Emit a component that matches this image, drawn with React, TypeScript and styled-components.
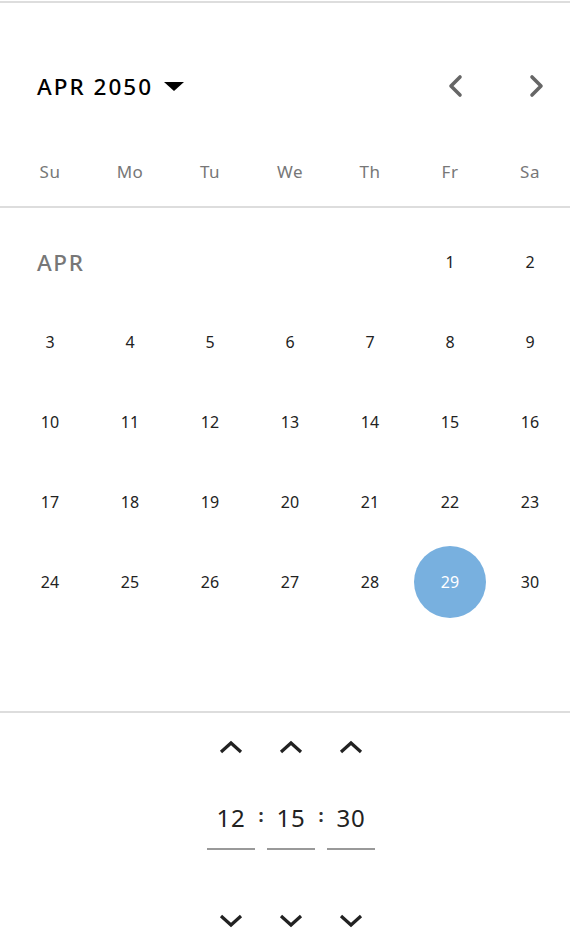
import React from 'react';
import styled, { createGlobalStyle } from 'styled-components';

const GlobalStyle = createGlobalStyle`
  body {
    margin: 0;
    background: #fff;
    font-family: "Noto Sans", "Open Sans", sans-serif;
  }
`;

const Picker = styled.div`
  width: 570px;
  margin-top: 1px;
  border-top: 2px solid #dddddd;
  color: #222;
`;

const Header = styled.div`
  display: flex;
  align-items: center;
  justify-content: space-between;
  height: 60px;
  margin-top: 53px;
  padding: 0 25px 0 37px;
`;

const MonthButton = styled.button`
  display: flex;
  align-items: center;
  gap: 11px;
  border: none;
  background: none;
  padding: 0;
  font-family: inherit;
  font-size: 22.5px;
  font-weight: 500;
  letter-spacing: 2px;
  color: #000;
  cursor: pointer;
`;

const Caret = styled.span`
  width: 0;
  height: 0;
  border-left: 10.5px solid transparent;
  border-right: 10.5px solid transparent;
  border-top: 9px solid #000;
`;

const NavGroup = styled.div`
  display: flex;
  align-items: center;
  gap: 66px;
`;

const NavButton = styled.button`
  display: flex;
  border: none;
  background: none;
  padding: 0;
  cursor: pointer;
`;

const WeekRow = styled.div`
  display: grid;
  grid-template-columns: repeat(7, 80px);
  padding: 35px 10px 15px;
  border-bottom: 2px solid #dddddd;
`;

const WeekDay = styled.div`
  height: 40px;
  display: flex;
  align-items: center;
  justify-content: center;
  font-size: 17px;
  letter-spacing: 0.5px;
  color: #777;
`;

const DayGrid = styled.div`
  display: grid;
  grid-template-columns: repeat(7, 80px);
  grid-auto-rows: 80px;
  padding: 14px 10px 89px;
  border-bottom: 2px solid #dddddd;
`;

const MonthLabel = styled.div`
  grid-column: span 5;
  display: flex;
  align-items: center;
  padding-left: 27px;
  font-size: 22.5px;
  font-weight: 500;
  letter-spacing: 1.6px;
  color: #777;
`;

const DayCell = styled.div`
  display: flex;
  align-items: center;
  justify-content: center;
`;

const DayButton = styled.button<{ $selected?: boolean }>`
  width: 72px;
  height: 72px;
  border: none;
  border-radius: 50%;
  padding: 0;
  font-family: inherit;
  font-size: 16px;
  color: ${(p) => (p.$selected ? '#fff' : '#222')};
  background: ${(p) => (p.$selected ? '#78b0df' : 'transparent')};
  cursor: pointer;
`;

const TimeSection = styled.div`
  display: flex;
  justify-content: center;
  align-items: flex-start;
  padding: 22px 0 0 12px;
`;

const TimeColumn = styled.div`
  display: flex;
  flex-direction: column;
  align-items: center;
  width: 48px;
`;

const Spin = styled.button`
  display: flex;
  align-items: center;
  justify-content: center;
  height: 24px;
  border: none;
  background: none;
  padding: 0;
  cursor: pointer;
`;

const TimeValue = styled.div`
  width: 48px;
  height: 62px;
  margin: 27px 0 59px;
  display: flex;
  align-items: center;
  justify-content: center;
  border-bottom: 2px solid #999;
  font-size: 24px;
  letter-spacing: 0.8px;
  color: #222;
`;

const Colon = styled.div`
  width: 12px;
  height: 58px;
  margin-top: 51px;
  display: flex;
  align-items: center;
  justify-content: center;
  font-size: 18px;
  font-weight: 700;
  color: #333;
`;

const Chevron = ({ dir }: { dir: 'left' | 'right' }) => (
  <svg width="16" height="24" viewBox="0 0 16 24">
    <polyline
      points={dir === 'left' ? '13,3 4,12 13,21' : '3,3 12,12 3,21'}
      fill="none"
      stroke="#666"
      strokeWidth="3.6"
      strokeLinecap="round"
      strokeLinejoin="round"
    />
  </svg>
);

const Arrow = ({ dir }: { dir: 'up' | 'down' }) => (
  <svg width="24" height="14" viewBox="0 0 24 14">
    <polyline
      points={dir === 'up' ? '2,12 12,3 22,12' : '2,2 12,11 22,2'}
      fill="none"
      stroke="#222"
      strokeWidth="3.2"
      strokeLinejoin="miter"
    />
  </svg>
);

const weekDays = ['Su', 'Mo', 'Tu', 'We', 'Th', 'Fr', 'Sa'];
const days = Array.from({ length: 30 }, (_, i) => i + 1);
const time = ['12', '15', '30'];

export default function App() {
  return (
    <>
      <GlobalStyle />
      <Picker>
        <Header>
          <MonthButton>
            APR 2050
            <Caret />
          </MonthButton>
          <NavGroup>
            <NavButton aria-label="Previous month">
              <Chevron dir="left" />
            </NavButton>
            <NavButton aria-label="Next month">
              <Chevron dir="right" />
            </NavButton>
          </NavGroup>
        </Header>

        <WeekRow>
          {weekDays.map((d) => (
            <WeekDay key={d}>{d}</WeekDay>
          ))}
        </WeekRow>

        <DayGrid>
          <MonthLabel>APR</MonthLabel>
          {days.map((d) => (
            <DayCell key={d}>
              <DayButton $selected={d === 29}>{d}</DayButton>
            </DayCell>
          ))}
        </DayGrid>

        <TimeSection>
          {time.map((t, i) => (
            <React.Fragment key={i}>
              {i > 0 && <Colon>:</Colon>}
              <TimeColumn>
                <Spin aria-label="Increase">
                  <Arrow dir="up" />
                </Spin>
                <TimeValue>{t}</TimeValue>
                <Spin aria-label="Decrease">
                  <Arrow dir="down" />
                </Spin>
              </TimeColumn>
            </React.Fragment>
          ))}
        </TimeSection>
      </Picker>
    </>
  );
}
